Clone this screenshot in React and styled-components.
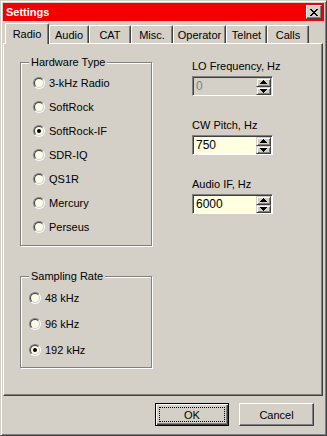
import React from 'react'
import styled, { createGlobalStyle } from 'styled-components'

const GlobalStyle = createGlobalStyle`
  html, body {
    margin: 0;
    padding: 0;
    background: #d4d0c8;
  }
  * {
    box-sizing: border-box;
  }
`

const Window = styled.div`
  width: 327px;
  height: 436px;
  display: flex;
  flex-direction: column;
  padding: 2px;
  background: #d4d0c8;
  border: 1px solid;
  border-color: #d4d0c8 #404040 #404040 #d4d0c8;
  box-shadow: inset 1px 1px #fff, inset -1px -1px #808080;
  font-family: 'Liberation Sans', Arial, sans-serif;
  font-size: 11px;
  color: #000;
`

const TitleBar = styled.div`
  height: 18px;
  display: flex;
  align-items: center;
  justify-content: space-between;
  background: #f40000;
  padding: 0 2px 0 3px;
`

const TitleText = styled.span`
  color: #fff;
  font-weight: bold;
  font-size: 11px;
`

const CloseButton = styled.div`
  width: 16px;
  height: 14px;
  display: flex;
  align-items: center;
  justify-content: center;
  background: #d4d0c8;
  border: 1px solid;
  border-color: #fff #404040 #404040 #fff;
  box-shadow: inset -1px -1px #808080;
`

const TabStrip = styled.div`
  display: flex;
  align-items: flex-end;
  height: 21px;
  margin-top: 1px;
  padding-left: 2px;
`

const Tab = styled.div`
  position: relative;
  z-index: ${p => (p.$active ? 1 : 0)};
  width: ${p => p.$w}px;
  height: ${p => (p.$active ? 21 : 18)}px;
  margin-bottom: ${p => (p.$active ? -1 : 0)}px;
  display: flex;
  align-items: center;
  justify-content: center;
  background: #d4d0c8;
  border-left: 1px solid #fff;
  border-top: 1px solid #fff;
  border-right: 1px solid #404040;
  border-radius: 2px 2px 0 0;
  box-shadow: inset -1px 0 #808080;
  padding-bottom: ${p => (p.$active ? 1 : 0)}px;
`

const Panel = styled.div`
  height: 353px;
  margin-right: 1px;
  border: 1px solid;
  border-color: #fff #404040 #404040 #fff;
  box-shadow: inset -1px -1px #808080;
  display: grid;
  grid-template-columns: 132px 1fr;
  column-gap: 40px;
  align-items: start;
  padding: 12px 0 0 16px;
`

const LeftColumn = styled.div`
  display: flex;
  flex-direction: column;
  gap: 24px;
`

const Group = styled.fieldset`
  margin: 0;
  padding: 2px 0 ${p => p.$pb}px 8px;
  border: 1px solid #808080;
  box-shadow: inset 1px 1px #fff, 1px 1px #fff;
  min-width: 0;
`

const Legend = styled.legend`
  padding: 0 2px;
  margin-left: 0;
  line-height: 13px;
  background: #d4d0c8;
`

const RadioRow = styled.div`
  height: ${p => p.$h}px;
  display: flex;
  align-items: center;
  gap: 4px;
  padding-left: ${p => p.$indent}px;
`

const RadioOuter = styled.span`
  width: 12px;
  height: 12px;
  border-radius: 50%;
  border: 1px solid;
  border-color: #808080 #fff #fff #808080;
  display: flex;
`

const RadioInner = styled.span`
  flex: 1;
  border-radius: 50%;
  border: 1px solid;
  border-color: #404040 #d4d0c8 #d4d0c8 #404040;
  background: #fbfbe6;
  display: flex;
  align-items: center;
  justify-content: center;
  &::after {
    content: '';
    width: 4px;
    height: 4px;
    border-radius: 50%;
    background: ${p => (p.$checked ? '#000' : 'transparent')};
  }
`

const RightColumn = styled.div`
  display: flex;
  flex-direction: column;
  gap: 23px;
  padding-top: 4px;
`

const Field = styled.div`
  display: flex;
  flex-direction: column;
  gap: 3px;
`

const FieldLabel = styled.span`
  line-height: 13px;
  color: ${p => (p.$disabled ? '#000' : '#000')};
`

const SpinBox = styled.div`
  width: 81px;
  height: 20px;
  display: flex;
  border: 1px solid;
  border-color: #808080 #fff #fff #808080;
  box-shadow: inset 1px 1px #404040;
  padding: 1px 1px 0 1px;
  background: ${p => (p.$disabled ? '#d4d0c8' : '#ffffe1')};
`

const SpinValue = styled.span`
  flex: 1;
  padding-left: 2px;
  line-height: 17px;
  font-size: 12px;
  color: ${p => (p.$disabled ? '#808080' : '#000')};
`

const SpinButtons = styled.div`
  width: 15px;
  display: flex;
  flex-direction: column;
`

const SpinButton = styled.div`
  flex: 1;
  display: flex;
  align-items: center;
  justify-content: center;
  background: #d4d0c8;
  border: 1px solid;
  border-color: #d4d0c8 #404040 #404040 #d4d0c8;
  box-shadow: inset 1px 1px #fff, inset -1px -1px #808080;
`

const ButtonRow = styled.div`
  display: flex;
  justify-content: flex-end;
  gap: 10px;
  padding: 7px 10px 0 0;
`

const Button = styled.div`
  width: ${p => p.$w}px;
  height: 23px;
  display: flex;
  align-items: center;
  justify-content: center;
  background: #d4d0c8;
  border: 1px solid;
  border-color: ${p => (p.$default ? '#000' : '#fff #404040 #404040 #fff')};
  box-shadow: ${p =>
    p.$default
      ? 'inset 1px 1px #fff, inset -1px -1px #404040, inset -2px -2px #808080'
      : 'inset -1px -1px #808080'};
  outline: ${p => (p.$default ? '1px dotted #000' : 'none')};
  outline-offset: -5px;
`

const CloseIcon = () => (
  <svg width="8" height="7" viewBox="0 0 8 7" shapeRendering="crispEdges">
    <path
      fill="#000"
      d="M0 0h2v1H0zM6 0h2v1H6zM1 1h2v1H1zM5 1h2v1H5zM2 2h4v1H2zM3 3h2v1H3zM2 4h4v1H2zM1 5h2v1H1zM5 5h2v1H5zM0 6h2v1H0zM6 6h2v1H6z"
    />
  </svg>
)

const Arrow = ({ up }) => (
  <svg width="7" height="4" viewBox="0 0 7 4" shapeRendering="crispEdges">
    <path fill="#000" d={up ? 'M3 0h1v1h1v1h1v1h1v1H0V3h1V2h1V1h1z' : 'M0 0h7v1H6v1H5v1H4v1H3V3H2V2H1V1H0z'} />
  </svg>
)

const tabs = [
  { name: 'Radio', w: 44 },
  { name: 'Audio', w: 40 },
  { name: 'CAT', w: 42 },
  { name: 'Misc.', w: 42 },
  { name: 'Operator', w: 53 },
  { name: 'Telnet', w: 41 },
  { name: 'Calls', w: 42 },
]

const hardware = ['3-kHz Radio', 'SoftRock', 'SoftRock-IF', 'SDR-IQ', 'QS1R', 'Mercury', 'Perseus']
const rates = ['48 kHz', '96 kHz', '192 kHz']

const Radio = ({ label, checked, h, indent }) => (
  <RadioRow $h={h} $indent={indent}>
    <RadioOuter>
      <RadioInner $checked={checked} />
    </RadioOuter>
    <span>{label}</span>
  </RadioRow>
)

const Spin = ({ label, value, disabled }) => (
  <Field>
    <FieldLabel $disabled={disabled}>{label}</FieldLabel>
    <SpinBox $disabled={disabled}>
      <SpinValue $disabled={disabled}>{value}</SpinValue>
      <SpinButtons>
        <SpinButton><Arrow up /></SpinButton>
        <SpinButton><Arrow /></SpinButton>
      </SpinButtons>
    </SpinBox>
  </Field>
)

export default function App() {
  return (
    <>
      <GlobalStyle />
      <Window>
        <TitleBar>
          <TitleText>Settings</TitleText>
          <CloseButton><CloseIcon /></CloseButton>
        </TitleBar>
        <TabStrip>
          {tabs.map((t, i) => (
            <Tab key={t.name} $w={t.w} $active={i === 0}>{t.name}</Tab>
          ))}
        </TabStrip>
        <Panel>
          <LeftColumn>
            <Group $pb={6}>
              <Legend>Hardware Type</Legend>
              {hardware.map(h => (
                <Radio key={h} label={h} checked={h === 'SoftRock-IF'} h={24} indent={4} />
              ))}
            </Group>
            <Group $pb={4}>
              <Legend>Sampling Rate</Legend>
              {rates.map(r => (
                <Radio key={r} label={r} checked={r === '192 kHz'} h={26} indent={0} />
              ))}
            </Group>
          </LeftColumn>
          <RightColumn>
            <Spin label="LO Frequency, Hz" value="0" disabled />
            <Spin label="CW Pitch, Hz" value="750" />
            <Spin label="Audio IF, Hz" value="6000" />
          </RightColumn>
        </Panel>
        <ButtonRow>
          <Button $w={74} $default>OK</Button>
          <Button $w={75}>Cancel</Button>
        </ButtonRow>
      </Window>
    </>
  )
}
